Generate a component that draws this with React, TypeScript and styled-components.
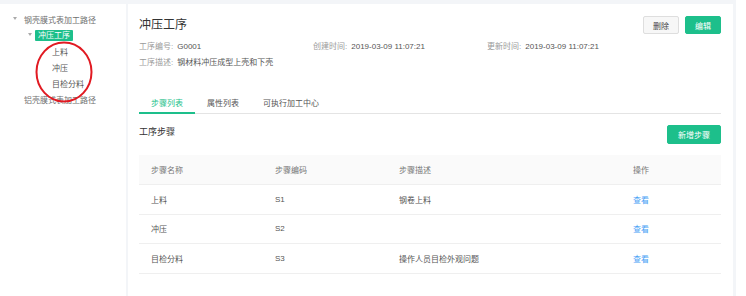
import React from "react";
import styled, { createGlobalStyle } from "styled-components";

const GREEN = "#1dbf8b";

const Global = createGlobalStyle`
  html, body { margin: 0; padding: 0; }
  body {
    background: #f3f5f8;
    font-family: "Liberation Sans", "Noto Sans CJK SC", sans-serif;
    -webkit-font-smoothing: antialiased;
  }
`;

const Page = styled.div`
  display: flex;
  height: 296px;
  padding-top: 4px;
  box-sizing: border-box;
`;

const Sidebar = styled.aside`
  position: relative;
  width: 126px;
  flex: none;
  background: #fff;
  padding-top: 7px;
  box-sizing: border-box;
`;

const TreeRow = styled.div<{ $level: number }>`
  display: flex;
  align-items: center;
  height: 16px;
  padding-left: ${(p) => [13, 28, 41][p.$level]}px;
  font-size: 8px;
  color: ${(p) => (p.$level === 0 ? "#6f6f6f" : "#555")};
  white-space: nowrap;
`;

const Caret = styled.span<{ $open?: boolean }>`
  display: inline-flex;
  width: 11px;
  flex: none;
  &::before {
    content: "";
    display: ${(p) => (p.$open ? "block" : "none")};
    width: 0;
    height: 0;
    border-left: 2.5px solid transparent;
    border-right: 2.5px solid transparent;
    border-top: 3.5px solid #aaa;
    margin-top: -1px;
  }
`;

const Badge = styled.span`
  margin-left: -4px;
  padding: 0 3px;
  height: 11px;
  line-height: 11px;
  background: ${GREEN};
  color: #fff;
  border-radius: 1px;
`;

const Annotation = styled.svg`
  position: absolute;
  left: 35px;
  top: 37px;
  width: 58px;
  height: 62px;
  overflow: visible;
`;

const Main = styled.main`
  flex: none;
  width: 605px;
  margin-left: 2px;
  background: #fff;
  padding: 12px 12px 0 11px;
  box-sizing: border-box;
  color: #333;
`;

const Edge = styled.div`
  flex: none;
  width: 10px;
  margin-left: 3px;
  margin-top: -4px;
  background: #fff;
`;

const Header = styled.div`
  display: flex;
  align-items: center;
  justify-content: space-between;
  height: 18px;
`;

const Title = styled.h1`
  margin: 0;
  font-size: 12px;
  font-weight: 400;
  color: #333;
  line-height: 16px;
`;

const Actions = styled.div`
  display: flex;
  gap: 6px;
`;

const Button = styled.button<{ $primary?: boolean }>`
  height: 18px;
  padding: 0 9px;
  font-family: inherit;
  font-size: 8px;
  border-radius: 2px;
  cursor: pointer;
  border: 1px solid ${(p) => (p.$primary ? GREEN : "#dedede")};
  background: ${(p) => (p.$primary ? GREEN : "#f7f7f7")};
  color: ${(p) => (p.$primary ? "#fff" : "#444")};
`;

const MetaGrid = styled.div`
  display: grid;
  grid-template-columns: 174px 174px 174px;
  margin-top: 5px;
`;

const MetaItem = styled.div<{ $wide?: boolean }>`
  grid-column: ${(p) => (p.$wide ? "1 / -1" : "auto")};
  font-size: 8px;
  line-height: 16px;
  white-space: nowrap;
`;

const MetaLabel = styled.span`
  color: #9a9a9a;
  margin-right: 4px;
`;

const MetaValue = styled.span`
  color: #555;
`;

const Tabs = styled.div`
  display: flex;
  margin-top: 25px;
  border-bottom: 1px solid #e4e4e4;
`;

const Tab = styled.div<{ $active?: boolean }>`
  padding: 0 12px;
  font-size: 8px;
  line-height: 16px;
  color: ${(p) => (p.$active ? GREEN : "#555")};
  border-bottom: 2px solid ${(p) => (p.$active ? GREEN : "transparent")};
  margin-bottom: -1px;
`;

const Toolbar = styled.div`
  display: flex;
  justify-content: space-between;
  align-items: flex-start;
  margin-top: 11px;
`;

const Section = styled.div`
  font-size: 9px;
  line-height: 14px;
  color: #333;
`;

const AddButton = styled(Button)`
  height: 19px;
  padding: 0 10px;
`;

const Table = styled.div`
  margin-top: 11px;
  font-size: 8px;
`;

const Row = styled.div<{ $head?: boolean }>`
  display: grid;
  grid-template-columns: 124px 124px 234px 1fr;
  align-items: center;
  height: ${(p) => (p.$head ? "30px" : "29.5px")};
  padding-left: 12px;
  box-sizing: border-box;
  background: ${(p) => (p.$head ? "#fafafa" : "#fff")};
  border-bottom: 1px solid #efefef;
  color: ${(p) => (p.$head ? "#777" : "#555")};
`;

const Link = styled.a`
  color: #4a9ff5;
  text-decoration: none;
  cursor: pointer;
`;

const steps = [
  { name: "上料", code: "S1", desc: "钢卷上料" },
  { name: "冲压", code: "S2", desc: "" },
  { name: "目检分料", code: "S3", desc: "操作人员目检外观问题" },
];

export default function App() {
  return (
    <>
      <Global />
      <Page>
        <Sidebar>
          <TreeRow $level={0}>
            <Caret $open />
            钢壳膜式表加工路径
          </TreeRow>
          <TreeRow $level={1}>
            <Caret $open />
            <Badge>冲压工序</Badge>
          </TreeRow>
          <TreeRow $level={2}>
            <Caret />
            上料
          </TreeRow>
          <TreeRow $level={2}>
            <Caret />
            冲压
          </TreeRow>
          <TreeRow $level={2}>
            <Caret />
            目检分料
          </TreeRow>
          <TreeRow $level={0}>
            <Caret />
            铝壳膜式表加工路径
          </TreeRow>
          <Annotation viewBox="0 0 58 62">
            <ellipse cx="29" cy="31" rx="27.5" ry="29.5" fill="none" stroke="#e11a22" strokeWidth="2" />
          </Annotation>
        </Sidebar>
        <Main>
          <Header>
            <Title>冲压工序</Title>
            <Actions>
              <Button>删除</Button>
              <Button $primary>编辑</Button>
            </Actions>
          </Header>
          <MetaGrid>
            <MetaItem>
              <MetaLabel>工序编号:</MetaLabel>
              <MetaValue>G0001</MetaValue>
            </MetaItem>
            <MetaItem>
              <MetaLabel>创建时间:</MetaLabel>
              <MetaValue>2019-03-09 11:07:21</MetaValue>
            </MetaItem>
            <MetaItem>
              <MetaLabel>更新时间:</MetaLabel>
              <MetaValue>2019-03-09 11:07:21</MetaValue>
            </MetaItem>
            <MetaItem $wide>
              <MetaLabel>工序描述:</MetaLabel>
              <MetaValue>钢材料冲压成型上壳和下壳</MetaValue>
            </MetaItem>
          </MetaGrid>
          <Tabs>
            <Tab $active>步骤列表</Tab>
            <Tab>属性列表</Tab>
            <Tab>可执行加工中心</Tab>
          </Tabs>
          <Toolbar>
            <Section>工序步骤</Section>
            <AddButton $primary>新增步骤</AddButton>
          </Toolbar>
          <Table>
            <Row $head>
              <span>步骤名称</span>
              <span>步骤编码</span>
              <span>步骤描述</span>
              <span>操作</span>
            </Row>
            {steps.map((s) => (
              <Row key={s.code}>
                <span>{s.name}</span>
                <span>{s.code}</span>
                <span>{s.desc}</span>
                <span>
                  <Link>查看</Link>
                </span>
              </Row>
            ))}
          </Table>
        </Main>
        <Edge />
      </Page>
    </>
  );
}
